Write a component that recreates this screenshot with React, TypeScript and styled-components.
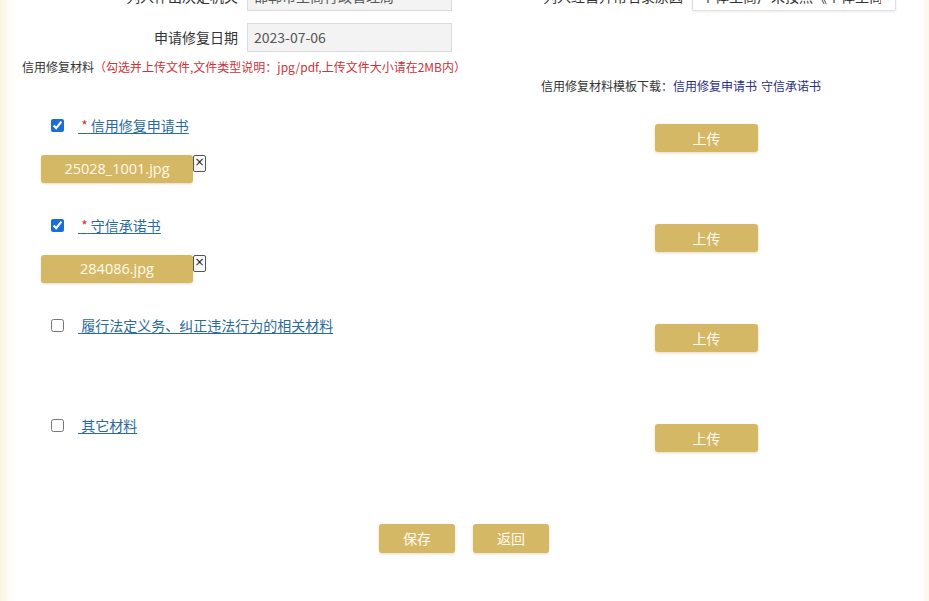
import React from "react";
import styled, { createGlobalStyle } from "styled-components";

const Global = createGlobalStyle`
  html, body { margin: 0; padding: 0; }
  body {
    width: 929px;
    height: 601px;
    overflow: hidden;
    font-family: "Noto Sans CJK SC", "Microsoft YaHei", "Liberation Sans", sans-serif;
    color: #333;
    background: linear-gradient(to right, #fbf3e2 0px, #fefbf5 8px, #ffffff 16px, #ffffff 922px, #faf7ee 926px, #faf7ee 929px);
  }
`;

const Page = styled.div`
  width: 929px;
  height: 601px;
  overflow: hidden;
`;

const FormGrid = styled.div`
  margin-top: -18px;
  display: grid;
  grid-template-columns: 238px 205px 222px 204px;
  column-gap: 9px;
  row-gap: 12px;
  align-items: center;
`;

const Label = styled.div`
  text-align: right;
  font-size: 14px;
  line-height: 29px;
  color: #333;
  white-space: nowrap;
`;

const TextInput = styled.div`
  box-sizing: border-box;
  height: 29px;
  border: 1px solid #dcdcdc;
  background: #f3f3f3;
  font-size: 14px;
  line-height: 27px;
  padding: 0 6px;
  color: #555;
  white-space: nowrap;
  overflow: hidden;
`;

const Select = styled.div`
  box-sizing: border-box;
  height: 29px;
  border: 1px solid #e0e0e0;
  border-radius: 2px;
  background: #fff;
  box-shadow: 0 1px 3px rgba(0, 0, 0, 0.08);
  font-size: 14px;
  line-height: 27px;
  padding: 0 3px 0 8px;
  color: #333;
  display: flex;
  align-items: center;
  gap: 3px;
`;

const SelectText = styled.span`
  flex: 1;
  min-width: 0;
  white-space: nowrap;
  overflow: hidden;
`;

const SelectArrow = styled.span`
  font-size: 8px;
  color: #333;
`;

const Note = styled.div`
  margin: 7px 0 0 22px;
  font-size: 12px;
  line-height: 16px;
  color: #333;
  white-space: nowrap;
`;

const Red = styled.span`
  color: #cc333b;
`;

const Templates = styled.div`
  margin: 3px 0 0 541px;
  font-size: 12px;
  line-height: 16px;
  color: #333;
  white-space: nowrap;
`;

const TemplateLink = styled.a`
  color: #2b2e86;
  text-decoration: none;
  margin-right: 4px;
`;

const Items = styled.div`
  margin-top: 23px;
  display: flex;
  flex-direction: column;
`;

const Item = styled.div`
  height: 100px;
  display: grid;
  grid-template-columns: 614px 103px;
  padding-left: 41px;
  align-items: start;
`;

const ItemLeft = styled.div`
  display: flex;
  flex-direction: column;
`;

const LinkRow = styled.div`
  display: flex;
  align-items: center;
  height: 16px;
  padding-left: 10px;
`;

const Check = styled.input`
  width: 13px;
  height: 13px;
  margin: 0 14px 0 0;
  accent-color: #1a6fd6;
`;

const ItemLink = styled.a`
  font-size: 14px;
  line-height: 16px;
  color: #2b6b9c;
  text-decoration: underline;
  text-underline-offset: 2px;
  white-space: pre;
`;

const Star = styled.span`
  color: #d2333c;
`;

const ChipRow = styled.div`
  display: flex;
  align-items: flex-start;
  margin-top: 22px;
`;

const Chip = styled.div`
  width: 152px;
  height: 28px;
  border-radius: 3px;
  background: #d5b866;
  color: #fdf8e8;
  font-size: 14.5px;
  line-height: 28px;
  text-align: center;
  font-family: "Open Sans", "Noto Sans CJK SC", sans-serif;
  box-shadow: 0 1px 2px rgba(150, 120, 40, 0.25);
`;

const CloseBtn = styled.div`
  box-sizing: border-box;
  width: 13px;
  height: 17px;
  border: 1px solid #555;
  border-radius: 2px;
  background: #fafafa;
  font-size: 12px;
  line-height: 13px;
  text-align: center;
  color: #222;
  font-family: "DejaVu Sans", sans-serif;
`;

const GoldButton = styled.div<{ $w: number; $h: number; $mt?: number }>`
  width: ${(p) => p.$w}px;
  height: ${(p) => p.$h}px;
  margin-top: ${(p) => p.$mt ?? 0}px;
  border-radius: 3px;
  background: #d5b866;
  color: #fffaf0;
  font-size: 14px;
  line-height: ${(p) => p.$h}px;
  text-align: center;
  box-shadow: 0 1px 3px rgba(160, 130, 50, 0.3);
`;

const Actions = styled.div`
  margin-top: 7px;
  display: flex;
  justify-content: center;
  gap: 18px;
  padding-right: 1px;
`;

type Mat = { name: string; required: boolean; checked: boolean; file?: string };

const materials: Mat[] = [
  { name: "信用修复申请书", required: true, checked: true, file: "25028_1001.jpg" },
  { name: "守信承诺书", required: true, checked: true, file: "284086.jpg" },
  { name: "履行法定义务、纠正违法行为的相关材料", required: false, checked: false },
  { name: "其它材料", required: false, checked: false },
];

export default function App() {
  return (
    <Page>
      <Global />
      <FormGrid>
        <Label>列入作出决定机关</Label>
        <TextInput>邯郸市工商行政管理局</TextInput>
        <Label>列入经营异常名录原因</Label>
        <Select>
          <SelectText>个体工商户未按照《个体工商户年度报告暂行办法》</SelectText>
          <SelectArrow>▼</SelectArrow>
        </Select>
        <Label>申请修复日期</Label>
        <TextInput>2023-07-06</TextInput>
      </FormGrid>
      <Note>
        信用修复材料<Red>（勾选并上传文件,文件类型说明：jpg/pdf,上传文件大小请在2MB内）</Red>
      </Note>
      <Templates>
        信用修复材料模板下载：<TemplateLink>信用修复申请书</TemplateLink>
        <TemplateLink>守信承诺书</TemplateLink>
      </Templates>
      <Items>
        {materials.map((m) => (
          <Item key={m.name}>
            <ItemLeft>
              <LinkRow>
                <Check type="checkbox" defaultChecked={m.checked} />
                <ItemLink>
                  {m.required ? (
                    <>
                      {" "}
                      <Star>*</Star> {m.name}
                    </>
                  ) : (
                    <> {m.name}</>
                  )}
                </ItemLink>
              </LinkRow>
              {m.file && (
                <ChipRow>
                  <Chip>{m.file}</Chip>
                  <CloseBtn>×</CloseBtn>
                </ChipRow>
              )}
            </ItemLeft>
            <GoldButton $w={103} $h={28} $mt={7}>
              上传
            </GoldButton>
          </Item>
        ))}
      </Items>
      <Actions>
        <GoldButton $w={76} $h={29}>保存</GoldButton>
        <GoldButton $w={76} $h={29}>返回</GoldButton>
      </Actions>
    </Page>
  );
}
